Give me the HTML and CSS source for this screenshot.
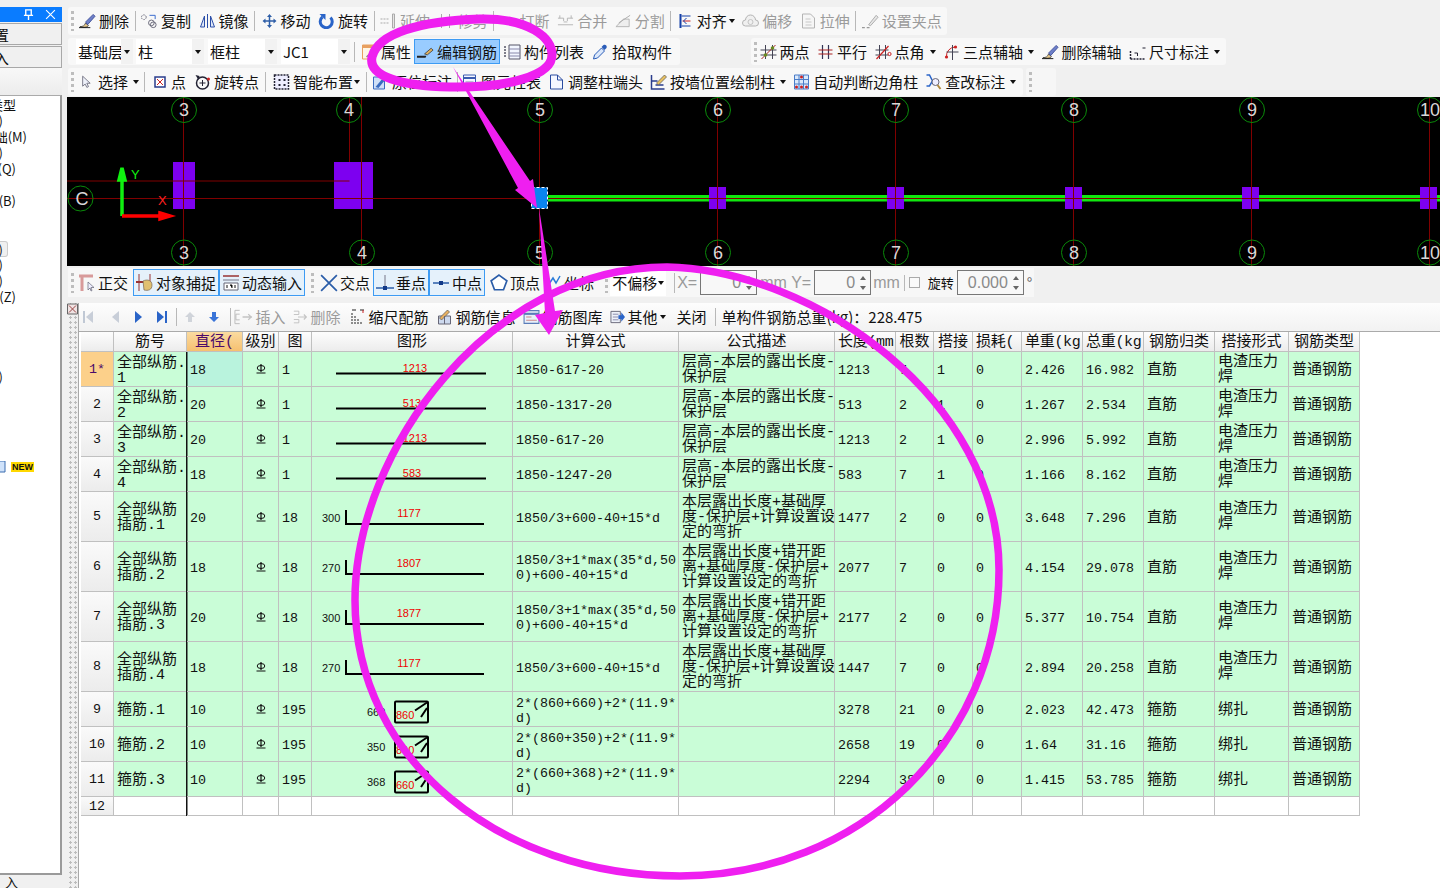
FILE: index.html
```html
<!DOCTYPE html>
<html lang="zh-CN">
<head>
<meta charset="utf-8">
<title>钢筋编辑</title>
<link rel="stylesheet" href="styles.css">
</head>
<body>
<svg class="defs" width="0" height="0">
<defs>
<symbol id="brush" viewBox="0 0 18 16"><path d="M1 14c3 0 5-1 6-4l3 3c-2 2-5 2-9 1z" fill="#e8c98a" stroke="#333" stroke-width=".8"/><path d="M7 9 15 1l2 2-8 9z" fill="#6d7fc8" stroke="#2a3c8c" stroke-width=".8"/><path d="M0 15h12" stroke="#111" stroke-width="1"/></symbol>
<symbol id="copy" viewBox="0 0 18 16"><circle cx="3" cy="4" r="2.5" fill="none" stroke="#667" stroke-dasharray="1.5 1"/><circle cx="11" cy="10" r="3" fill="none" stroke="#667"/><circle cx="13" cy="12" r="3" fill="none" stroke="#667"/><path d="M9 2h6v4" fill="none" stroke="#36c" stroke-width="1"/></symbol>
<symbol id="mirror" viewBox="0 0 16 16"><path d="M1 14 5 3v11zM15 14 11 3v11z" fill="#dfe8f8" stroke="#2b4ea8"/><path d="M8 1v14" stroke="#2b4ea8"/></symbol>
<symbol id="move" viewBox="0 0 16 16"><path d="M8 1 5.5 4h5zM8 15l-2.500-3h5zM1 8l3-2.500v5zM15 8l-3-2.500v5z" fill="#2f5fa8"/><path d="M8 3v10M3 8h10" stroke="#2f5fa8" stroke-width="1.500"/></symbol>
<symbol id="rotate" viewBox="0 0 16 16"><path d="M4 4a6 6 0 1 0 8 .5" fill="none" stroke="#2a64c8" stroke-width="3"/><path d="M1 1h6v6z" fill="#2a64c8"/></symbol>
<symbol id="extend" viewBox="0 0 16 16"><path d="M0 6h9M0 10h9" stroke="#aaa" stroke-dasharray="2 1"/><path d="M12 1h2v14h-2z" fill="#e6e6e6" stroke="#aaa"/></symbol>
<symbol id="trim" viewBox="0 0 16 16"><path d="M3 1v14M11 1v14" stroke="#aaa"/><path d="M0 8h9" stroke="#bbb"/></symbol>
<symbol id="break" viewBox="0 0 16 16"><path d="M0 8h5M11 8h5M5 4l3 4-3 4M11 4 8 8l3 4" fill="none" stroke="#aaa"/></symbol>
<symbol id="merge" viewBox="0 0 18 16"><path d="M1 5h6v3M17 5h-6v3M1 12h16" fill="none" stroke="#b4b4b4"/><path d="M3 2v3M15 2v3M7 9h4" stroke="#b4b4b4"/></symbol>
<symbol id="split" viewBox="0 0 18 16"><path d="M1 14 9 6h6v8z" fill="#eee" stroke="#b4b4b4"/><path d="M4 10 16 2" stroke="#aaa"/></symbol>
<symbol id="align" viewBox="0 0 14 16"><path d="M2 1v14" stroke="#1540a8" stroke-width="2"/><path d="M3 3h9M3 13h9" stroke="#1540a8"/><path d="M4 8h8" stroke="#c22"/><path d="M8 5 5 8l3 3" fill="none" stroke="#1540a8"/></symbol>
<symbol id="offset" viewBox="0 0 16 16"><path d="M3 13a3 3 0 0 1 0-6 5 5 0 0 1 10 0 3 3 0 0 1 0 6z" fill="#f0f0f0" stroke="#b4b4b4"/><circle cx="8" cy="9" r="2.500" fill="none" stroke="#c4c4c4"/></symbol>
<symbol id="stretch" viewBox="0 0 16 16"><path d="M2 1h8l4 4v10H2z" fill="#f6f6f6" stroke="#b4b4b4"/><path d="M5 6h5M5 9h6M5 12h6" stroke="#c8c8c8"/></symbol>
<symbol id="grip" viewBox="0 0 18 16"><path d="M7 12 15 2l2 2-8 9z" fill="#e6e6e6" stroke="#aaa"/><path d="M0 15h3M5 15h3" stroke="#999" stroke-width="1.500"/></symbol>
<symbol id="attr" viewBox="0 0 16 16"><path d="M1 1h13v14H1z" fill="#fff6e6" stroke="#e8a060"/><path d="M1 1h13v3H1z" fill="#e8a060"/><path d="M5 13l8-8" stroke="#888" stroke-width="1.500"/></symbol>
<symbol id="pencil" viewBox="0 0 18 16"><path d="M0 12h10l-1 2H0z" fill="#222"/><path d="M8 10 15 4l2 2-6 5z" fill="#dfb060" stroke="#333" stroke-width=".8"/></symbol>
<symbol id="list" viewBox="0 0 17 16"><path d="M1 2v12" stroke="#556" stroke-dasharray="2 1" stroke-width="1.500"/><path d="M5 1h11v14H5z" fill="#f2f6ff" stroke="#556"/><path d="M5 5h11M5 9h11M5 12h11" stroke="#88a"/></symbol>
<symbol id="pick" viewBox="0 0 16 16"><path d="M1 15l1-4 7-7 3 3-7 7z" fill="#dbe8fb" stroke="#2a5cb8"/><path d="M9 3l2-2c2-1 4 1 3 3l-2 2z" fill="#2a5cb8"/></symbol>
<symbol id="two" viewBox="0 0 16 16"><path d="M5 1v14M12 1v14M0 6h16M0 11h16" stroke="#445" stroke-width="1"/><path d="M1 15 15 1" stroke="#a22"/><circle cx="5" cy="11" r="1.800" fill="#6a8a20"/><circle cx="12" cy="4" r="1.800" fill="#6a8a20"/></symbol>
<symbol id="parallel" viewBox="0 0 16 16"><path d="M5 1v14M11 1v14" stroke="#335" stroke-width="1.200"/><path d="M1 6h14M1 10h14" stroke="#a22" stroke-width="1.200"/></symbol>
<symbol id="angle" viewBox="0 0 16 16"><path d="M4 1v14M10 1v14M0 6h13M0 11h13" stroke="#445"/><path d="M1 15 13 2" stroke="#c22" stroke-width="1.200"/><circle cx="14" cy="10" r="1.600" fill="none" stroke="#c22"/></symbol>
<symbol id="three" viewBox="0 0 16 16"><path d="M3 13A9 9 0 0 1 12 3" fill="none" stroke="#c22"/><path d="M9 1v15M3 8h12" stroke="#445"/><circle cx="3" cy="13" r="1.600" fill="#c22"/><circle cx="12" cy="3" r="1.600" fill="#c22"/></symbol>
<symbol id="dim" viewBox="0 0 16 16"><path d="M1 15V6M1 15h14" stroke="#223" stroke-dasharray="2 1" stroke-width="1.500"/><path d="M5 9h3v3" fill="none" stroke="#223"/><path d="M13 4h3" stroke="#223"/></symbol>
<symbol id="cursor" viewBox="0 0 12 16"><path d="M2 1v12l3-2.500 2 4 2-1-2-4h4z" fill="#eef1fa" stroke="#667"/></symbol>
<symbol id="point" viewBox="0 0 12 12"><path d="M1 1h10v10H1z" fill="#fff" stroke="#2a3c8c" stroke-width="1.500"/><path d="M3 3l6 6M9 3l-6 6" stroke="#c22"/></symbol>
<symbol id="rotpoint" viewBox="0 0 16 16"><circle cx="8" cy="9" r="6" fill="none" stroke="#223" stroke-width="1.500"/><path d="M8 6v6M5 9h6" stroke="#223"/><path d="M1 1l4 1-1 4z" fill="#223"/><circle cx="14" cy="5" r="1.500" fill="#c22"/></symbol>
<symbol id="smart" viewBox="0 0 16 16"><path d="M1 1h14v14H1z" fill="#eef" stroke="#223" stroke-dasharray="2 1" stroke-width="1.500"/><path d="M5 5h2v2H5zM10 5h2v2h-2zM5 10h2v2H5zM10 10h2v2h-2z" fill="#223"/></symbol>
<symbol id="orig" viewBox="0 0 16 16"><path d="M1 3h11v12H1z" fill="#cfe0f8" stroke="#3a6cc0"/><path d="M3 13 13 1l2 2L6 14z" fill="#3a6cc0"/></symbol>
<symbol id="tbl" viewBox="0 0 14 16"><path d="M1 1h12v14H1z" fill="#f4f7ff" stroke="#3a5cb0"/><path d="M1 4h12" stroke="#3a5cb0" stroke-width="2"/><path d="M3 8h8M3 11h8" stroke="#88a"/></symbol>
<symbol id="adjust" viewBox="0 0 14 16"><path d="M1 1h7l5 5v9H1z" fill="#f4f7ff" stroke="#2a4ca0"/><path d="M8 1v5h5" fill="none" stroke="#2a4ca0"/></symbol>
<symbol id="wall" viewBox="0 0 16 16"><path d="M1 1v14h13M1 7h6M5 11h8" fill="none" stroke="#2a3c8c" stroke-width="1.500"/><path d="M6 9 14 1l2 2-8 8z" fill="#e8c060" stroke="#555" stroke-width=".7"/></symbol>
<symbol id="auto" viewBox="0 0 16 16"><path d="M1 1h14v14H1z" fill="#dbe9fb" stroke="#4a7cc8"/><path d="M1 5.500h14M1 10h14M5.500 1v14M10 1v14" stroke="#4a7cc8"/><circle cx="3" cy="13" r="1.500" fill="#c22"/><circle cx="8" cy="13" r="1.500" fill="#c22"/><circle cx="13" cy="13" r="1.500" fill="#c22"/><circle cx="8" cy="3" r="1.500" fill="#c22"/></symbol>
<symbol id="check" viewBox="0 0 16 16"><path d="M1 1h3l3 6-3 5H1" fill="none" stroke="#2a64c8" stroke-width="1.500"/><circle cx="10" cy="8" r="3.500" fill="#eef" stroke="#667"/><path d="M12 11l3 4" stroke="#b08a40" stroke-width="2"/></symbol>
<symbol id="ortho" viewBox="0 0 18 18"><path d="M1 2h14M4 2v15" stroke="#d89a9a" stroke-width="3"/><path d="M10 8v8l2-2 1 3 1-.5-1-3h3z" fill="#eef" stroke="#667" stroke-width=".7"/></symbol>
<symbol id="osnap" viewBox="0 0 18 18"><path d="M3 0v17M14 0v9" stroke="#933"/><path d="M0 8h9" stroke="#933" stroke-width="2"/><path d="M7 7c4-2 9-1 9 4s-4 6-8 5z" fill="#e0c070" stroke="#765" stroke-width=".7"/></symbol>
<symbol id="dyn" viewBox="0 0 18 18"><path d="M1 2h16" stroke="#933" stroke-width="1.500"/><path d="M1 6h16" stroke="#778"/><path d="M2 9h14v7H2z" fill="#fff" stroke="#667"/><path d="M5 11v3M8 11h2v3M13 11v3" stroke="#111"/></symbol>
<symbol id="cross" viewBox="0 0 16 16"><path d="M1 1l14 14M15 1 1 15" stroke="#2a5ca8" stroke-width="1.500"/></symbol>
<symbol id="perp" viewBox="0 0 18 18"><path d="M0 14h18" stroke="#2a5ca8" stroke-width="1.500"/><path d="M9 1v13" stroke="#778"/><rect x="7" y="12" width="4" height="4" fill="#123a88"/></symbol>
<symbol id="mid" viewBox="0 0 18 18"><path d="M1 9h16" stroke="#2a5ca8" stroke-width="1.500"/><rect x="7" y="7" width="4" height="4" fill="#123a88"/></symbol>
<symbol id="vertex" viewBox="0 0 16 16"><path d="M8 1l7 5-3 8H4L1 6z" fill="#fff" stroke="#2a5ca8" stroke-width="1.500"/></symbol>
<symbol id="coord" viewBox="0 0 18 18"><path d="M2 3v14" stroke="#555"/><path d="M5 10l4-6 3 5 4-7" fill="none" stroke="#2a7cd8" stroke-width="1.500"/></symbol>
<symbol id="first" viewBox="0 0 12 14"><path d="M1 1h2v12H1z" fill="#c0c8d4"/><path d="M11 1v12L4 7z" fill="#c8ced8"/></symbol>
<symbol id="prev" viewBox="0 0 12 14"><path d="M10 1v12L3 7z" fill="#c8ced8"/></symbol>
<symbol id="next" viewBox="0 0 12 14"><path d="M2 1v12l7-6z" fill="#2a64c8"/></symbol>
<symbol id="last" viewBox="0 0 12 14"><path d="M1 1v12l7-6z" fill="#2a64c8"/><path d="M9 1h2v12H9z" fill="#2a64c8"/></symbol>
<symbol id="up" viewBox="0 0 12 14"><path d="M6 2 1 7h3v5h4V7h3z" fill="#d0d4da"/></symbol>
<symbol id="down" viewBox="0 0 12 14"><path d="M6 12 1 7h3V2h4v5h3z" fill="#3a74d8"/></symbol>
<symbol id="ins" viewBox="0 0 20 16"><path d="M1 1h5M1 1v14M1 15h5M6 5H2v6h4" fill="none" stroke="#bbb"/><path d="M9 8h10M15 5l3 3-3 3" fill="none" stroke="#c4c4c4" stroke-width="1.400"/></symbol>
<symbol id="del" viewBox="0 0 18 16"><path d="M1 1h6M1 5h6M1 11h6M1 15h6M7 1v4M7 11v4" fill="none" stroke="#bbb"/><path d="M6 8h10M13 5l3 3-3 3" fill="none" stroke="#c4c4c4" stroke-width="1.400"/></symbol>
<symbol id="scale" viewBox="0 0 14 16"><path d="M1 15V3M4 15V6M7 15V9M10 15v-3" stroke="#222" stroke-dasharray="2 1"/><path d="M1 1h4M9 1h4" stroke="#222"/><path d="M12 1v3" stroke="#c22"/></symbol>
<symbol id="info" viewBox="0 0 16 16"><path d="M2 7h12v8H2z" fill="#cdd9ee" stroke="#667"/><path d="M3 9 11 1l2 2-8 8z" fill="#e8b060" stroke="#555" stroke-width=".7"/><path d="M8 7v8" stroke="#667"/></symbol>
<symbol id="lib" viewBox="0 0 16 14"><path d="M1 1h14v12H1z" fill="#e8f0fa" stroke="#5a7cb8"/><path d="M1 4h14" stroke="#5a7cb8" stroke-width="2"/><path d="M3 7h5M3 10h10" stroke="#c88"/></symbol>
<symbol id="other" viewBox="0 0 16 14"><path d="M1 1h10v12H1z" fill="#eef2fa" stroke="#667"/><path d="M3 4h6M3 7h6M3 10h6" stroke="#88a"/><path d="M9 5h3V2l4 5-4 5V9H9z" fill="#2a64c8"/></symbol>
<symbol id="grade" viewBox="0 0 10 10"><ellipse cx="5" cy="4" rx="3.800" ry="2.500" fill="none" stroke="#111"/><path d="M5 0v8M0.500 9h9" stroke="#111" stroke-width="1.200"/></symbol>
</defs>
</svg>

<div class="app">
  <aside class="left">
    <div class="title"><svg class="t-ic" viewBox="0 0 10 12"><path d="M2 1h6v6H2zM0 7h10M5 7v5" fill="none" stroke="#fff" stroke-width="1.500"/></svg><svg class="t-ic" viewBox="0 0 10 10"><path d="M1 1l8 8M9 1 1 9" stroke="#fff"/></svg></div>
    <div class="tab"><span>置</span></div>
    <div class="tab tab2"><span>入</span></div>
    <div class="tab-gap"></div>
    <div class="side-list">
      <div class="li w16">类型</div>
      <div class="li w3">)</div>
      <div class="li w27">础(M)</div>
      <div class="li w3">)</div>
      <div class="li w16">(Q)</div>
      <div class="li"></div>
      <div class="li w16">(B)</div>
      <div class="li"></div>
      <div class="li"></div>
      <div class="li w3 boxed">)</div>
      <div class="li w3">)</div>
      <div class="li w3">)</div>
      <div class="li w16">(Z)</div>
      <div class="li"></div><div class="li"></div><div class="li"></div><div class="li"></div>
      <div class="li w3">)</div>
      <div class="li"></div><div class="li"></div><div class="li"></div><div class="li"></div>
      <div class="li new-row"><svg class="new-ic" viewBox="0 0 6 12"><path d="M-4 0h9v11h-9z" fill="#cfe2fa" stroke="#3a6cb0"/></svg><span class="new">NEW</span></div>
    </div>
    <div class="side-bottom"><span>入</span></div>
  </aside>

  <main class="right">
    <div class="bars">
      <div class="bar b1">
        <i class="grip"></i>
        <span class="it"><svg class="ic"><use href="#brush"/></svg>删除</span><i class="sep"></i>
        <span class="it"><svg class="ic"><use href="#copy"/></svg>复制</span>
        <span class="it"><svg class="ic"><use href="#mirror"/></svg>镜像</span><i class="sep"></i>
        <span class="it"><svg class="ic"><use href="#move"/></svg>移动</span>
        <span class="it"><svg class="ic"><use href="#rotate"/></svg>旋转</span><i class="sep"></i>
        <span class="it off"><svg class="ic"><use href="#extend"/></svg>延伸</span>
        <span class="it off"><svg class="ic"><use href="#trim"/></svg>修剪</span><i class="sep"></i>
        <span class="it off"><svg class="ic"><use href="#break"/></svg>打断</span>
        <span class="it off"><svg class="ic"><use href="#merge"/></svg>合并</span>
        <span class="it off"><svg class="ic"><use href="#split"/></svg>分割</span><i class="sep"></i>
        <span class="it"><svg class="ic"><use href="#align"/></svg>对齐<i class="dd tight"></i></span>
        <span class="it off"><svg class="ic"><use href="#offset"/></svg>偏移</span>
        <span class="it off"><svg class="ic"><use href="#stretch"/></svg>拉伸</span><i class="sep"></i>
        <span class="it off"><svg class="ic"><use href="#grip"/></svg>设置夹点</span>
      </div>
      <div class="bar-line">
        <div class="bar b2">
          <span class="combo c-a"><span class="c-t">基础层</span><i class="c-b"><i class="dd"></i></i></span>
          <span class="combo c-b2"><span class="c-t">柱</span><i class="c-b"><i class="dd"></i></i></span>
          <span class="combo c-c"><span class="c-t">框柱</span><i class="c-b"><i class="dd"></i></i></span>
          <span class="combo c-c"><span class="c-t">JC1</span><i class="c-b"><i class="dd"></i></i></span>
          <i class="sep s-b"></i>
          <span class="it it-attr"><svg class="ic"><use href="#attr"/></svg>属性</span>
          <span class="it sel"><svg class="ic"><use href="#pencil"/></svg>编辑钢筋</span>
          <span class="it"><svg class="ic"><use href="#list"/></svg>构件列表</span>
          <span class="it it-pick"><svg class="ic"><use href="#pick"/></svg>拾取构件</span>
        </div>
        <div class="bar b2r">
          <i class="grip"></i>
          <span class="it"><svg class="ic"><use href="#two"/></svg>两点</span>
          <span class="it"><svg class="ic"><use href="#parallel"/></svg>平行</span>
          <span class="it"><svg class="ic"><use href="#angle"/></svg>点角<i class="dd"></i></span>
          <span class="it"><svg class="ic"><use href="#three"/></svg>三点辅轴<i class="dd"></i></span>
          <span class="it"><svg class="ic"><use href="#brush"/></svg>删除辅轴</span>
          <span class="it"><svg class="ic"><use href="#dim"/></svg>尺寸标注<i class="dd"></i></span>
        </div>
      </div>
      <div class="bar-line">
        <div class="bar b3">
          <i class="grip"></i>
          <span class="it"><svg class="ic cur"><use href="#cursor"/></svg>选择<i class="dd"></i></span><i class="sep s-3a"></i>
          <span class="it"><svg class="ic pt"><use href="#point"/></svg>点</span>
          <span class="it it-rp"><svg class="ic"><use href="#rotpoint"/></svg>旋转点</span><i class="sep s-3b"></i>
          <span class="it"><svg class="ic"><use href="#smart"/></svg>智能布置<i class="dd tighter"></i></span><i class="sep s-3c"></i>
          <span class="it"><svg class="ic"><use href="#orig"/></svg>原位标注</span><i class="sep s-3d"></i>
          <span class="it"><svg class="ic"><use href="#tbl"/></svg>图元柱表</span>
          <span class="it"><svg class="ic"><use href="#adjust"/></svg>调整柱端头</span>
          <span class="it"><svg class="ic"><use href="#wall"/></svg>按墙位置绘制柱<i class="dd"></i></span>
          <span class="it"><svg class="ic"><use href="#auto"/></svg>自动判断边角柱</span>
          <span class="it"><svg class="ic"><use href="#check"/></svg>查改标注<i class="dd"></i></span>
        </div>
        <div class="bar b3r"><i class="grip"></i></div>
      </div>
    </div>

    <svg class="canvas" viewBox="67 97 1373 169">
      <g class="ax">
        <path d="M183.500 97v169M349.500 97v84H67M361.500 97v169M539.500 97v169M717.500 97v169M895.500 97v169M1073.500 97v169M1251.500 97v169M1429.500 97v169M67 198.500h1373"/>
      </g>
      <g class="col">
        <rect x="173" y="162" width="22" height="47"/><rect x="334" y="162" width="39" height="47"/>
      </g>
      <rect class="beam" x="548" y="195" width="892" height="6.500"/><path class="ax" d="M548 198.500h892"/>
      <g class="col">
        <rect x="709" y="187" width="17" height="22"/><rect x="887" y="187" width="17" height="22"/><rect x="1065" y="187" width="17" height="22"/><rect x="1242" y="187" width="17" height="22"/><rect x="1420" y="187" width="17" height="22"/>
      </g>
      <rect class="picked" x="531.500" y="187.500" width="16" height="21"/>
      <path class="ax" d="M717.500 187v22M895.500 187v22M1073.500 187v22M1251.500 187v22M1429.500 187v22M709 198.500h17M887 198.500h17M1065 198.500h17M1242 198.500h17M1420 198.500h17M173 198.500h22M334 198.500h39M361.500 162v47M183.500 162v47M334 181h15.500M173 181h22"/>
      <g class="bub">
        <circle cx="184" cy="110" r="12.500"/><circle cx="349" cy="110" r="12.500"/><circle cx="540" cy="110" r="12.500"/><circle cx="718" cy="110" r="12.500"/><circle cx="896" cy="110" r="12.500"/><circle cx="1074" cy="110" r="12.500"/><circle cx="1252" cy="110" r="12.500"/><circle cx="1430" cy="110" r="12.500"/>
        <circle cx="184" cy="252.500" r="12.500"/><circle cx="362" cy="252.500" r="12.500"/><circle cx="540" cy="252.500" r="12.500"/><circle cx="718" cy="252.500" r="12.500"/><circle cx="896" cy="252.500" r="12.500"/><circle cx="1074" cy="252.500" r="12.500"/><circle cx="1252" cy="252.500" r="12.500"/><circle cx="1430" cy="252.500" r="12.500"/>
        <circle cx="80.500" cy="198.500" r="12.500"/>
      </g>
      <g class="num-t">
        <text x="184" y="116">3</text><text x="349" y="116">4</text><text x="540" y="116">5</text><text x="718" y="116">6</text><text x="896" y="116">7</text><text x="1074" y="116">8</text><text x="1252" y="116">9</text><text x="1430" y="116">10</text>
        <text x="184" y="259">3</text><text x="362" y="259">4</text><text x="540" y="259">5</text><text x="718" y="259">6</text><text x="896" y="259">7</text><text x="1074" y="259">8</text><text x="1252" y="259">9</text><text x="1430" y="259">10</text>
        <text x="82" y="205">C</text>
      </g>
      <path class="ga" d="M122 216v-37M119 180l3-12 3 12z"/>
      <path class="ra" d="M122 216h38M160 213l10 3-10 3z"/>
      <text class="ty" x="131" y="179">Y</text>
      <text class="tx" x="158" y="205">X</text>
    </svg>

    <div class="snap">
      <div class="snap-in">
        <i class="grip"></i>
        <span class="it sn"><svg class="ic i18"><use href="#ortho"/></svg>正交</span>
        <span class="it sn on"><svg class="ic i18"><use href="#osnap"/></svg>对象捕捉</span>
        <span class="it sn on"><svg class="ic i18"><use href="#dyn"/></svg>动态输入</span>
        <i class="grip g2"></i>
        <span class="it sn"><svg class="ic i18"><use href="#cross"/></svg>交点</span>
        <span class="it sn on"><svg class="ic i18"><use href="#perp"/></svg>垂点</span>
        <span class="it sn on"><svg class="ic i18"><use href="#mid"/></svg>中点</span>
        <span class="it sn sn-v"><svg class="ic i18"><use href="#vertex"/></svg>顶点</span>
        <span class="it sn sn-c"><svg class="ic i18"><use href="#coord"/></svg>坐标</span>
        <i class="grip g3"></i>
        <span class="sel-box"><span>不偏移</span><i class="dd"></i></span>
        <i class="sep s-x"></i>
        <span class="lab lab-x">X=</span>
        <span class="spin w57"><span>0</span><i class="arrows"><i class="a-u"></i><i class="a-d"></i></i></span>
        <span class="lab lab-mm">mm</span>
        <span class="lab lab-y">Y=</span>
        <span class="spin w57"><span>0</span><i class="arrows"><i class="a-u"></i><i class="a-d"></i></i></span>
        <span class="lab lab-m2">mm</span>
        <i class="sep s-c"></i>
        <i class="chk"></i>
        <span class="rot">旋转</span>
        <span class="spin w67"><span>0.000</span><i class="arrows"><i class="a-u"></i><i class="a-d"></i></i></span>
        <span class="deg">°</span>
      </div>
    </div>

    <div class="lower">
      <div class="splitter"><svg class="close-ic" viewBox="0 0 11 11"><path d="M.5.500h10v10H.5z" fill="#f0e4e4" stroke="#666"/><path d="M2 2l7 7M9 2 2 9" stroke="#944"/></svg></div>
      <div class="editor">
        <div class="etb">
          <svg class="nav nav-f"><use href="#first"/></svg><svg class="nav"><use href="#prev"/></svg><svg class="nav"><use href="#next"/></svg><svg class="nav nav-l"><use href="#last"/></svg>
          <i class="sep s-n"></i>
          <svg class="nav"><use href="#up"/></svg><svg class="nav nav-l"><use href="#down"/></svg>
          <i class="sep s-n2"></i>
          <span class="et off"><svg class="ic w20"><use href="#ins"/></svg>插入</span>
          <span class="et off et-del"><svg class="ic w15b"><use href="#del"/></svg>删除</span>
          <span class="et"><svg class="ic w15"><use href="#scale"/></svg>缩尺配筋</span>
          <span class="et"><svg class="ic"><use href="#info"/></svg>钢筋信息</span>
          <span class="et"><svg class="ic"><use href="#lib"/></svg>钢筋图库</span>
          <span class="et et-o"><svg class="ic w15b"><use href="#other"/></svg>其他<i class="dd tight"></i></span>
          <span class="et">关闭</span>
          <i class="sep s-n3"></i>
          <span class="et">单构件钢筋总重(kg)：228.475</span>
        </div>
        <table class="grid">
          <colgroup>
            <col class="c0"><col class="c1"><col class="c2"><col class="c3"><col class="c4"><col class="c5"><col class="c6"><col class="c7"><col class="c8"><col class="c9"><col class="c10"><col class="c11"><col class="c12"><col class="c13"><col class="c14"><col class="c15"><col class="c16">
          </colgroup>
          <thead>
            <tr class="hd"><th></th><th>筋号</th><th class="cur-h">直径(</th><th>级别</th><th>图</th><th>图形</th><th>计算公式</th><th>公式描述</th><th class="lft">长度(mm</th><th>根数</th><th>搭接</th><th class="lft">损耗(</th><th class="lft">单重(kg</th><th class="lft">总重(kg</th><th>钢筋归类</th><th>搭接形式</th><th>钢筋类型</th></tr>
          </thead>
          <tbody>
            <tr class="r35"><th class="rh cur-r">1*</th><td class="bn">全部纵筋.<br>1</td><td class="m cur-c fr">18</td><td class="g"><svg class="gs"><use href="#grade"/></svg></td><td class="m">1</td><td class="sh"><svg class="shape"><path class="st" d="M24 21.500h150"/><text class="rd" x="103" y="20">1213</text></svg></td><td class="m">1850-617-20</td><td class="ds">层高-本层的露出长度-<br>保护层</td><td class="m">1213</td><td class="m">7</td><td class="m">1</td><td class="m">0</td><td class="m">2.426</td><td class="m">16.982</td><td class="z">直筋</td><td class="ds">电渣压力<br>焊</td><td class="z">普通钢筋</td></tr>
            <tr class="r35"><th class="rh">2</th><td class="bn">全部纵筋.<br>2</td><td class="m fr">20</td><td class="g"><svg class="gs"><use href="#grade"/></svg></td><td class="m">1</td><td class="sh"><svg class="shape"><path class="st" d="M24 21.500h150"/><text class="rd" x="100" y="20">513</text></svg></td><td class="m">1850-1317-20</td><td class="ds">层高-本层的露出长度-<br>保护层</td><td class="m">513</td><td class="m">2</td><td class="m">1</td><td class="m">0</td><td class="m">1.267</td><td class="m">2.534</td><td class="z">直筋</td><td class="ds">电渣压力<br>焊</td><td class="z">普通钢筋</td></tr>
            <tr class="r35"><th class="rh">3</th><td class="bn">全部纵筋.<br>3</td><td class="m fr">20</td><td class="g"><svg class="gs"><use href="#grade"/></svg></td><td class="m">1</td><td class="sh"><svg class="shape"><path class="st" d="M24 21.500h150"/><text class="rd" x="103" y="20">1213</text></svg></td><td class="m">1850-617-20</td><td class="ds">层高-本层的露出长度-<br>保护层</td><td class="m">1213</td><td class="m">2</td><td class="m">1</td><td class="m">0</td><td class="m">2.996</td><td class="m">5.992</td><td class="z">直筋</td><td class="ds">电渣压力<br>焊</td><td class="z">普通钢筋</td></tr>
            <tr class="r35"><th class="rh">4</th><td class="bn">全部纵筋.<br>4</td><td class="m fr">18</td><td class="g"><svg class="gs"><use href="#grade"/></svg></td><td class="m">1</td><td class="sh"><svg class="shape"><path class="st" d="M24 21.500h150"/><text class="rd" x="100" y="20">583</text></svg></td><td class="m">1850-1247-20</td><td class="ds">层高-本层的露出长度-<br>保护层</td><td class="m">583</td><td class="m">7</td><td class="m">1</td><td class="m">0</td><td class="m">1.166</td><td class="m">8.162</td><td class="z">直筋</td><td class="ds">电渣压力<br>焊</td><td class="z">普通钢筋</td></tr>
            <tr class="r50"><th class="rh">5</th><td class="bn">全部纵筋<br>插筋.1</td><td class="m fr">20</td><td class="g"><svg class="gs"><use href="#grade"/></svg></td><td class="m">18</td><td class="sh"><svg class="shape s50"><path class="st" d="M34 18v14h138"/><text class="bk" x="10" y="30">300</text><text class="rd" x="97" y="25">1177</text></svg></td><td class="m">1850/3+600-40+15*d</td><td class="ds">本层露出长度+基础厚<br>度-保护层+计算设置设<br>定的弯折</td><td class="m">1477</td><td class="m">2</td><td class="m">0</td><td class="m">0</td><td class="m">3.648</td><td class="m">7.296</td><td class="z">直筋</td><td class="ds">电渣压力<br>焊</td><td class="z">普通钢筋</td></tr>
            <tr class="r50"><th class="rh">6</th><td class="bn">全部纵筋<br>插筋.2</td><td class="m fr">18</td><td class="g"><svg class="gs"><use href="#grade"/></svg></td><td class="m">18</td><td class="sh"><svg class="shape s50"><path class="st" d="M34 18v14h138"/><text class="bk" x="10" y="30">270</text><text class="rd" x="97" y="25">1807</text></svg></td><td class="m">1850/3+1*max(35*d,50<br>0)+600-40+15*d</td><td class="ds">本层露出长度+错开距<br>离+基础厚度-保护层+<br>计算设置设定的弯折</td><td class="m">2077</td><td class="m">7</td><td class="m">0</td><td class="m">0</td><td class="m">4.154</td><td class="m">29.078</td><td class="z">直筋</td><td class="ds">电渣压力<br>焊</td><td class="z">普通钢筋</td></tr>
            <tr class="r50"><th class="rh">7</th><td class="bn">全部纵筋<br>插筋.3</td><td class="m fr">20</td><td class="g"><svg class="gs"><use href="#grade"/></svg></td><td class="m">18</td><td class="sh"><svg class="shape s50"><path class="st" d="M34 18v14h138"/><text class="bk" x="10" y="30">300</text><text class="rd" x="97" y="25">1877</text></svg></td><td class="m">1850/3+1*max(35*d,50<br>0)+600-40+15*d</td><td class="ds">本层露出长度+错开距<br>离+基础厚度-保护层+<br>计算设置设定的弯折</td><td class="m">2177</td><td class="m">2</td><td class="m">0</td><td class="m">0</td><td class="m">5.377</td><td class="m">10.754</td><td class="z">直筋</td><td class="ds">电渣压力<br>焊</td><td class="z">普通钢筋</td></tr>
            <tr class="r50"><th class="rh">8</th><td class="bn">全部纵筋<br>插筋.4</td><td class="m fr">18</td><td class="g"><svg class="gs"><use href="#grade"/></svg></td><td class="m">18</td><td class="sh"><svg class="shape s50"><path class="st" d="M34 18v14h138"/><text class="bk" x="10" y="30">270</text><text class="rd" x="97" y="25">1177</text></svg></td><td class="m">1850/3+600-40+15*d</td><td class="ds">本层露出长度+基础厚<br>度-保护层+计算设置设<br>定的弯折</td><td class="m">1447</td><td class="m">7</td><td class="m">0</td><td class="m">0</td><td class="m">2.894</td><td class="m">20.258</td><td class="z">直筋</td><td class="ds">电渣压力<br>焊</td><td class="z">普通钢筋</td></tr>
            <tr class="r35"><th class="rh">9</th><td class="z">箍筋.1</td><td class="m fr">10</td><td class="g"><svg class="gs"><use href="#grade"/></svg></td><td class="m">195</td><td class="sh"><svg class="shape"><rect class="st" x="83" y="9.500" width="33" height="21" rx="1"/><path class="st" d="M103 18.500l12-8M109 25l6-9"/><text class="bk" x="55" y="24">660</text><text class="rd rs" x="84" y="27">860</text></svg></td><td class="m">2*(860+660)+2*(11.9*<br>d)</td><td class="ds"></td><td class="m">3278</td><td class="m">21</td><td class="m">0</td><td class="m">0</td><td class="m">2.023</td><td class="m">42.473</td><td class="z">箍筋</td><td class="z">绑扎</td><td class="z">普通钢筋</td></tr>
            <tr class="r35"><th class="rh">10</th><td class="z">箍筋.2</td><td class="m fr">10</td><td class="g"><svg class="gs"><use href="#grade"/></svg></td><td class="m">195</td><td class="sh"><svg class="shape"><rect class="st" x="83" y="9.500" width="33" height="21" rx="1"/><path class="st" d="M103 18.500l12-8M109 25l6-9"/><text class="bk" x="55" y="24">350</text><text class="rd rs" x="84" y="27">860</text></svg></td><td class="m">2*(860+350)+2*(11.9*<br>d)</td><td class="ds"></td><td class="m">2658</td><td class="m">19</td><td class="m">0</td><td class="m">0</td><td class="m">1.64</td><td class="m">31.16</td><td class="z">箍筋</td><td class="z">绑扎</td><td class="z">普通钢筋</td></tr>
            <tr class="r35"><th class="rh">11</th><td class="z">箍筋.3</td><td class="m fr">10</td><td class="g"><svg class="gs"><use href="#grade"/></svg></td><td class="m">195</td><td class="sh"><svg class="shape"><rect class="st" x="83" y="9.500" width="33" height="21" rx="1"/><path class="st" d="M103 18.500l12-8M109 25l6-9"/><text class="bk" x="55" y="24">368</text><text class="rd rs" x="84" y="27">660</text></svg></td><td class="m">2*(660+368)+2*(11.9*<br>d)</td><td class="ds"></td><td class="m">2294</td><td class="m">38</td><td class="m">0</td><td class="m">0</td><td class="m">1.415</td><td class="m">53.785</td><td class="z">箍筋</td><td class="z">绑扎</td><td class="z">普通钢筋</td></tr>
            <tr class="r19 blank"><th class="rh">12</th><td></td><td class="fr"></td><td></td><td></td><td></td><td></td><td></td><td></td><td></td><td></td><td></td><td></td><td></td><td></td><td></td><td></td></tr>
          </tbody>
        </table>
      </div>
    </div>
  </main>
</div>

<svg class="marks" viewBox="0 0 1440 888">
  <path class="ring r-big" d="M667 267C815 270 999 400 999 570C999 740 860 876 680 876C500 876 355 760 355 600C355 450 490 267 667 267Z"/>
  <path class="ring r-small" d="M372 57C378 33 420 21 480 19C530 18 552 38 552 55C552 75 510 88 450 87C400 86 368 76 372 57Z"/>
  <path class="arrow" d="M453 67 530 181 533 179 537 208 515 190 518 188Z"/>
  <path class="arrow" d="M539 208 555 311 563 310 549 335 535 315 545 313Z"/>
</svg>
</body>
</html>
```
FILE: styles.css
```css
* { box-sizing: border-box; }
html, body { margin: 0; padding: 0; }
body {
  width: 1440px; height: 888px; overflow: hidden; position: relative;
  background: #f0f0f0; color: #111;
  font: 15px/20px "Noto Sans CJK SC", "Liberation Sans", sans-serif;
}
i { font-style: normal; display: block; }
.defs { position: absolute; }
.app { display: grid; grid-template-columns: 62px 5px 1fr; height: 888px; }

/* left dock */
.left { grid-column: 1; display: flex; flex-direction: column; padding-top: 7px; overflow: hidden; height: 888px; }
.title { height: 15px; background: #0a7cff; display: flex; justify-content: flex-end; align-items: center; gap: 11px; padding-right: 6px; margin-bottom: 1px; }
.t-ic { width: 11px; height: 11px; }
.tab { height: 22px; border: 1px solid #a8a8a8; border-left: 0; background: #f0f0f0; font-size: 15px; line-height: 21px; overflow: hidden; }
.tab2 { margin-top: 1px; }
.tab span { display: block; margin-left: -6px; }
.tab-gap { height: 27px; background: linear-gradient(#f8f8f8, #ececec); }
.side-list { flex: 1; background: #fff; border-right: 2px solid #9a9a9a; border-bottom: 2px solid #9a9a9a; border-top: 1px solid #aaa; overflow: hidden; }
.li { height: 16px; line-height: 16px; font-size: 13px; display: flex; justify-content: flex-end; white-space: nowrap; margin-top: 0; }
.w3 { width: 3px; } .w16 { width: 16px; } .w27 { width: 27px; }
.side-list .li:first-child { margin-top: 1px; }
.boxed { width: 8px; background: #f0f0f0; border: 1px solid #ccc; border-left: 0; border-radius: 0 3px 3px 0; padding-right: 4px; }
.new-row { justify-content: flex-start; align-items: center; margin-top: 10px; gap: 5px; }
.new-ic { width: 6px; height: 12px; }
.new { background: #ffd800; color: #111; font: 700 9px/10px "Liberation Sans", sans-serif; padding: 0 1px; }
.side-bottom { height: 13px; font-size: 13px; line-height: 13px; overflow: hidden; background: #f0f0f0; }
.side-bottom span { display: block; margin-left: 5px; }

/* right column */
.right { grid-column: 3; min-width: 0; display: flex; flex-direction: column; height: 888px; }
.bars { height: 97px; padding-top: 7px; display: flex; flex-direction: column; gap: 3px; }
.bar-line { display: flex; }
.bar { display: flex; align-items: center; gap: 8px; background: #f8f8f8; border-radius: 3px; white-space: nowrap; margin-left: 1px; }
.b1 { width: 879px; height: 28px; padding-left: 3px; gap: 7.500px; }
.b1 > .grip { margin-right: -2.500px; }
.b2 { width: 612px; height: 27px; padding-left: 8px; gap: 4px; }
.b2r { width: 475px; height: 27px; margin-left: 71px; padding-left: 3px; gap: 7.500px; }
.b2r > .grip { margin-right: -5px; }
.b3 { width: 955px; height: 28px; padding-left: 3px; gap: 7px; }
.b3r { width: 30px; height: 28px; margin-left: 3px; padding-left: 3px; background: #f6f6f6; }
.grip { width: 3px; height: 20px; flex: none; margin-right: -1px; background: repeating-linear-gradient(#bdbdbd 0 3px, transparent 3px 6px); }
.sep { width: 1px; height: 20px; flex: none; background: #b8b8b8; margin: 0 -2px; }
.s-3a { margin: 0 2px 0 -2px; }
.s-3b { margin: 0 0 0 -1px; }
.s-3c { margin: 0 -2px 0 -1px; }
.s-3d { margin: 0 -4px 0 -2px; }
.it-rp { margin-left: 1px; }
.it { display: inline-flex; align-items: center; flex: none; color: #111; }
.it.off, .et.off { color: #9b9b9b; }
.ic { width: 17px; height: 16px; margin-right: 3px; flex: none; }
.cur { width: 10px; margin: 0 7px 0 1px; }
.pt { width: 12px; margin: 0 5px 0 0; }
.dd { width: 0; height: 0; border: 3.5px solid transparent; border-top: 4px solid #111; border-bottom: 0; margin-left: 5px; flex: none; }
.dd.tight { margin-left: 2px; }
.dd.tighter { margin-left: 1px; }
.sel { background: #99ccff; border: 1px solid #3d9bf3; height: 25px; padding: 0 2px; }
.it-attr { margin-right: -1px; }
.it-pick { margin-left: 4px; }
.combo { display: flex; height: 25px; background: #fff; align-items: center; flex: none; overflow: hidden; }
.c-a { width: 57px; } .c-b2 { width: 68px; margin-left: -1px; } .c-c { width: 69px; margin-left: 0; }
.c-t { flex: 1; padding-left: 2px; overflow: hidden; white-space: nowrap; }
.c-b { width: 12px; height: 25px; background: #f2f2f2; display: flex; align-items: center; justify-content: center; flex: none; }
.c-b .dd { margin: 0; }
.s-b { margin: 0 2px 0 0; }

/* drawing canvas */
.canvas { display: block; width: 1373px; height: 169px; background: #000; flex: none; }
.canvas .ax, .ax path { fill: none; stroke: #800000; stroke-width: 1; }
.col rect { fill: #7d00f0; }
.beam { fill: #10e810; }
.picked { fill: #0a84f0; stroke: #fff; stroke-dasharray: 3 2; }
.bub circle { fill: none; stroke: #0a8a0a; stroke-width: 1; }
.num-t text { fill: #d8d8d8; font: 18px "Liberation Sans", sans-serif; text-anchor: middle; }
.ga { fill: #10f010; stroke: #10f010; stroke-width: 3.500px; stroke-linejoin: miter; }
.ra { fill: #ff0000; stroke: #ff0000; stroke-width: 3.500px; }
.ty { fill: #10f010; font: 13px "Liberation Sans", sans-serif; }
.tx { fill: #ff2020; font: 13px "Liberation Sans", sans-serif; }

/* snap bar */
.snap { height: 37px; padding-top: 2px; flex: none; }
.snap-in { display: flex; align-items: center; height: 29px; background: #f7f7f7; padding-left: 3px; width: 966px; margin-left: 1px; white-space: nowrap; }
.sn { height: 27px; padding: 0 2px 0 0; border: 1px solid transparent; }
.sn.on { background: #e5f1fb; border-color: #3d9bf3; }
.sn-v { margin-left: 2px; }
.sn-c { margin-left: -2px; }
.i18 { width: 18px; height: 18px; margin: 0 2px 0 2px; }
.snap-in > .grip:first-child { margin-right: 1px; }
.snap-in > .sn:nth-child(2) { padding-right: 4px; }
.g2 { margin: 0 3px 0 6px; }
.g3 { margin: 0 2px 0 8px; }
.sel-box { display: flex; align-items: center; background: #fff; width: 56px; height: 27px; padding-left: 2px; overflow: hidden; flex: none; }
.sel-box span { width: 45px; overflow: hidden; flex: none; }
.sel-box .dd { margin-left: 1px; }
.s-x { margin: 0 0 0 8px; }
.lab { color: #9a9a9a; font-family: "Liberation Sans", sans-serif; font-size: 16px; }
.lab-x { margin: 0 3px 0 2px; }
.spin { display: flex; align-items: center; justify-content: flex-end; border: 1px solid #777; background: #f8f8f8; height: 25px; color: #8a8a8a; font: 16px "Liberation Sans", sans-serif; flex: none; }
.w57 { width: 57px; }
.w67 { width: 67px; }
.arrows { width: 14px; display: flex; flex-direction: column; align-items: center; gap: 6px; margin-left: 1px; flex: none; }
.a-u { width: 0; height: 0; border: 3px solid transparent; border-bottom: 4px solid #666; border-top: 0; }
.a-d { width: 0; height: 0; border: 3px solid transparent; border-top: 4px solid #666; border-bottom: 0; }
.lab-mm { margin-left: 3px; width: 28px; overflow: hidden; }
.lab-y { margin: 0 3px 0 3px; }
.lab-m2 { margin-left: 2px; }
.s-c { margin: 0 4px 0 4px; height: 16px; }
.chk { width: 11px; height: 11px; border: 1px solid #aaa; background: #fafafa; flex: none; }
.rot { font-size: 13px; margin: 0 3px 0 8px; }
.deg { margin-left: 3px; color: #666; }

/* lower editor */
.lower { flex: 1; min-height: 0; display: flex; }
.splitter { width: 12px; flex: none; background: #f0f0f0 radial-gradient(#bcbcbc 1px, transparent 1.300px) 1px 12px / 5px 5px; border-right: 1px solid #a8a8a8; padding: 0; }
.close-ic { display: block; width: 11px; height: 12px; }
.editor { flex: 1; background: #fff; min-width: 0; overflow: hidden; }
.etb { height: 29px; display: flex; align-items: center; background: linear-gradient(#fdfdfd, #f2f2f2); border-bottom: 1px solid #aaa; white-space: nowrap; padding-left: 3px; }
.nav { width: 12px; height: 14px; flex: none; margin-right: 11.500px; }
.nav-f { margin-right: 15px; }
.nav-l { margin-right: 0; }
.s-n { height: 18px; margin: 0 7px 0 8px; }
.s-n2 { height: 18px; margin: 0 3px 0 10px; }
.s-n3 { height: 18px; margin: 0 6px 0 1px; }
.et { display: inline-flex; align-items: center; margin-right: 7px; flex: none; }
.et-del { margin-right: 10px; }
.et-o { margin-right: 11px; }
.w20 { width: 19px; }
.w15 { width: 14px; margin-right: 4px; }
.w15b { width: 15px; }

/* rebar grid */
.grid { border-collapse: separate; border-spacing: 0; table-layout: fixed; width: 1279px; margin-left: 2px; font: 15px/15px "Liberation Mono", "Noto Sans CJK SC", monospace; }
.c0 { width: 33px; } .c1 { width: 73px; } .c2 { width: 56px; } .c3 { width: 36px; } .c4 { width: 33px; } .c5 { width: 201px; } .c6 { width: 166px; } .c7 { width: 156px; } .c8 { width: 61px; } .c9 { width: 38px; } .c10 { width: 39px; } .c11 { width: 49px; } .c12 { width: 61px; } .c13 { width: 61px; } .c14 { width: 71px; } .c15 { width: 74px; } .c16 { width: 71px; }
.grid th, .grid td { border-right: 1px solid #c0c0c0; border-bottom: 1px solid #c0c0c0; padding: 0; overflow: hidden; white-space: nowrap; font-weight: 400; }
.grid td { background: #c9fdd7; padding-left: 2px; text-align: left; vertical-align: middle; }
.hd { height: 20px; }
.hd th { background: linear-gradient(#fdfdfd, #ececec); text-align: center; line-height: 16px; padding-top: 3px; }
.hd th.lft { text-align: left; padding-left: 3px; letter-spacing: -.3px; }
.hd .cur-h { background: linear-gradient(#fbdba0, #f6c070); color: #4b0a6a; }
.r35 { height: 35px; } .r50 { height: 50px; } .r19 { height: 19px; }
.grid .rh { background: linear-gradient(#fafafa, #ececec); text-align: center; font: 13.330px/15px "Liberation Mono", monospace; }
.grid .cur-r { background: #fcd08a; color: #4b0a6a; }
.grid .m { font: 13.330px/15px "Liberation Mono", "Noto Sans CJK SC", monospace; padding: 3px 0 0 3px; }
.grid .bn { padding: 3px 0 0 3px; }
.grid .ds { padding: 1px 0 0 3px; }
.grid .z { padding: 3px 0 0 3px; }
.grid .g { text-align: center; padding-left: 0; line-height: 0; }
.grid .fr { box-shadow: -1px 0 0 #111, inset .5px 0 0 #111; }
.grid .cur-c { background: #b9f3dd; }
.grid td.sh { padding: 0; line-height: 0; }
.blank td { background: #fff; }
.gs { width: 10px; height: 10px; }
.shape { display: block; width: 200px; height: 34px; overflow: visible; }
.s50 { height: 49px; }
.st { fill: none; stroke: #000; stroke-width: 2; }
.rd { fill: #f00000; font: 11px "Liberation Sans", sans-serif; text-anchor: middle; }
.rd.rs { text-anchor: start; }
.bk { fill: #111; font: 11px "Liberation Sans", sans-serif; }

/* hand-drawn annotation layer */
.marks { position: absolute; left: 0; top: 0; width: 1440px; height: 888px; pointer-events: none; }
.ring { fill: none; stroke: #ef1ff0; }
.r-big { stroke-width: 7.500px; }
.r-small { stroke-width: 9px; }
.arrow { fill: #ef1ff0; }
```
